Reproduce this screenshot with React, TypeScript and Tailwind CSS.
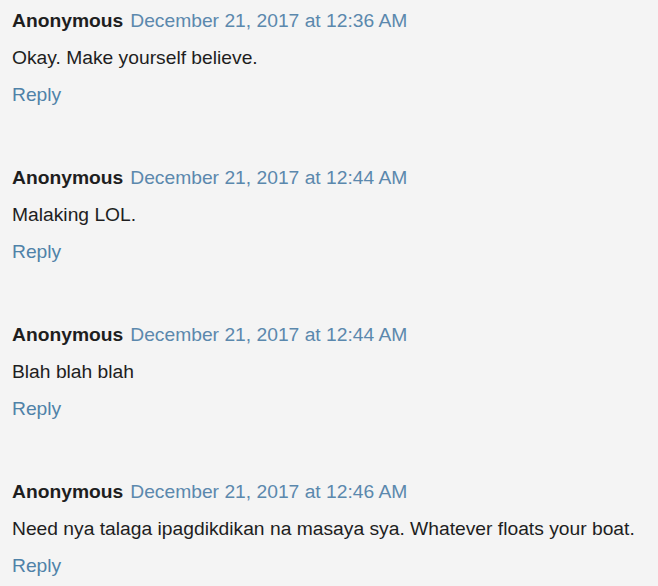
import React from "react";

const comments = [
  { date: "December 21, 2017 at 12:36 AM", body: "Okay. Make yourself believe." },
  { date: "December 21, 2017 at 12:44 AM", body: "Malaking LOL." },
  { date: "December 21, 2017 at 12:44 AM", body: "Blah blah blah" },
  { date: "December 21, 2017 at 12:46 AM", body: "Need nya talaga ipagdikdikan na masaya sya. Whatever floats your boat." },
];

export default function App() {
  return (
    <div
      className="w-[658px] h-[586px] bg-[#f4f4f4] overflow-hidden pl-[12px] pt-[2px] text-[19.25px]"
      style={{ fontFamily: '"Liberation Sans", Arial, sans-serif' }}
    >
      <div className="flex flex-col gap-[46px]">
        {comments.map((c, i) => (
          <div key={i} className="flex flex-col">
            <div className="leading-[37px] flex items-baseline gap-[7px]">
              <span className="font-bold text-[#1e1e1e]">Anonymous</span>
              <span className="text-[#5b88ad]">{c.date}</span>
            </div>
            <div className="leading-[37px] text-[#1e1e1e]">{c.body}</div>
            <div className="leading-[37px] text-[#4f82a8]">Reply</div>
          </div>
        ))}
      </div>
    </div>
  );
}
